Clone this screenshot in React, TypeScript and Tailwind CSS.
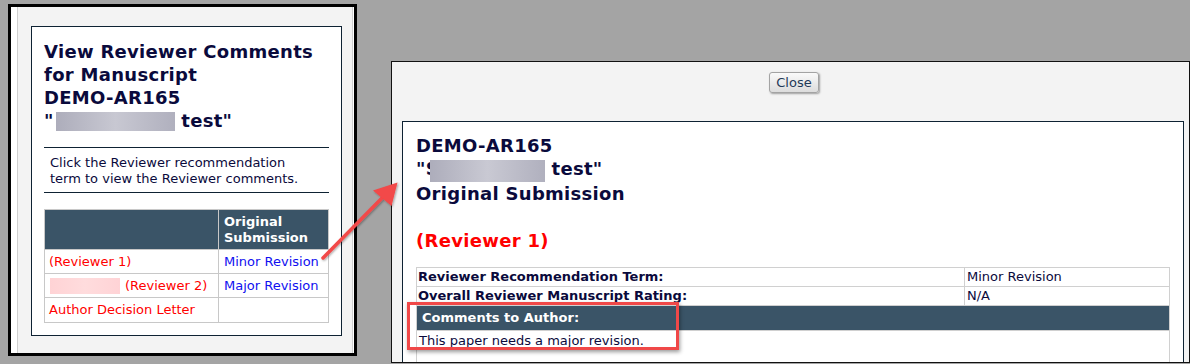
import React from "react";

const NAVY = "text-[#0a0a3c]";

function Blur({ className }: { className: string }) {
  return <span className={`inline-block ${className}`} />;
}

export default function App() {
  return (
    <div className="relative w-[1190px] h-[364px] overflow-hidden bg-[#a4a4a4] flex items-start font-['DejaVu_Sans',Verdana,sans-serif]">
      {/* Left window */}
      <div className="ml-[8px] mt-[4px] w-[349px] h-[352px] shrink-0 border-[3px] border-black bg-white flex pl-[6px] pr-[1px]">
        <div className="flex-1 border-x border-[#cfcfcf] bg-[#f3f3f3] pt-[19px] pl-[13px]">
          <div className="w-[311px] h-[310px] border border-[#0e2233] bg-white px-[12px] pt-[13px]">
            <h1 className={`text-[18px] leading-[23px] font-bold tracking-[0.3px] ${NAVY}`}>
              View Reviewer Comments
              <br />
              for Manuscript
              <br />
              DEMO-AR165
              <br />"
              <Blur className="ml-[2px] w-[119px] h-[19px] align-[-4px] bg-gradient-to-r from-[#adadbb] via-[#c8c8d2] to-[#b0b0be]" /> test"
            </h1>
            <div className="mt-[15px] border-t border-[#0e2233]" />
            <p className={`mt-[7px] pl-[6px] pr-[20px] text-[13px] leading-[16px] ${NAVY}`}>
              Click the Reviewer recommendation term to view the Reviewer comments.
            </p>
            <div className="mt-[5px] border-t border-[#0e2233]" />
            <div className="mt-[16px] w-fit border-l border-t border-[#c8c8c8] grid grid-cols-[174px_110px] text-[13px] leading-[16px]">
              <div className="h-[40px] bg-[#3a5467] border-r border-b border-[#c8c8c8]" />
              <div className="h-[40px] bg-[#3a5467] border-r border-b border-[#c8c8c8] pt-[4px] pl-[5px] font-bold text-white">
                Original
                <br />
                Submission
              </div>
              <div className="h-[24px] border-r border-b border-[#c8c8c8] flex items-center pl-[4px] text-[#ff0000]">
                (Reviewer 1)
              </div>
              <div className="h-[24px] border-r border-b border-[#c8c8c8] flex items-center pl-[5px] text-[#1010f0]">
                Minor Revision
              </div>
              <div className="h-[24px] border-r border-b border-[#c8c8c8] flex items-center pl-[5px] text-[#ff0000]">
                <Blur className="w-[70px] h-[16px] bg-gradient-to-r from-[#ffd3d5] via-[#ffdcdd] to-[#ffd3d6]" />
                <span className="ml-[5px]">(Reviewer 2)</span>
              </div>
              <div className="h-[24px] border-r border-b border-[#c8c8c8] flex items-center pl-[5px] text-[#1010f0]">
                Major Revision
              </div>
              <div className="h-[25px] border-r border-b border-[#c8c8c8] flex items-center pl-[4px] text-[#ff0000]">
                Author Decision Letter
              </div>
              <div className="h-[25px] border-r border-b border-[#c8c8c8]" />
            </div>
          </div>
        </div>
      </div>

      {/* Right window */}
      <div className="ml-[34px] mt-[61px] flex-1 h-[302px] border border-[#111111] bg-[#f3f3f3] overflow-hidden flex flex-col">
        <div className="pt-[10px] pl-[7px] flex justify-center">
          <button className="w-[50px] h-[21px] rounded-[3px] border border-[#a3a3a3] bg-gradient-to-b from-[#fafafa] to-[#dcdcdc] shadow-[1px_1px_2px_rgba(0,0,0,0.35)] text-[13px] leading-[16px] text-[#1f3a58]">
            Close
          </button>
        </div>
        <div className="mt-[28px] ml-[10px] mr-[5px] flex-1 border border-b-0 border-[#0e2233] bg-white pl-[13px] pr-[12px] pt-[12px]">
          <h2 className={`text-[18px] leading-[23px] font-bold tracking-[0.3px] ${NAVY}`}>
            DEMO-AR165
            <br />
            "S
            <Blur className="ml-[-9px] w-[115px] h-[22px] align-[-7px] bg-gradient-to-r from-[#adadbb] via-[#c9c9d3] to-[#b0b0be]" /> test"
            <br />
            Original Submission
          </h2>
          <div className="mt-[24px] text-[18px] leading-[23px] font-bold tracking-[0.3px] text-[#ff0000]">
            (Reviewer 1)
          </div>
          <div className="mt-[15px] w-fit border-l border-t border-[#d0d0d0] grid grid-cols-[548px_205px] text-[13px] leading-[16px]">
            <div className={`h-[19px] border-r border-b border-[#d0d0d0] flex items-center pl-[1px] font-bold ${NAVY}`}>
              Reviewer Recommendation Term:
            </div>
            <div className={`h-[19px] border-r border-b border-[#d0d0d0] flex items-center pl-[2px] ${NAVY}`}>
              Minor Revision
            </div>
            <div className={`h-[19px] border-r border-b border-[#d0d0d0] flex items-center pl-[1px] font-bold ${NAVY}`}>
              Overall Reviewer Manuscript Rating:
            </div>
            <div className={`h-[19px] border-r border-b border-[#d0d0d0] flex items-center pl-[2px] ${NAVY}`}>
              N/A
            </div>
            <div className="col-span-2 h-[25px] bg-[#3a5467] border-r border-b border-[#d0d0d0] flex items-center pl-[5px] font-bold text-white">
              Comments to Author:
            </div>
            <div className={`col-span-2 h-[40px] border-r border-[#d0d0d0] pt-[2px] pl-[2px] ${NAVY}`}>
              This paper needs a major revision.
            </div>
          </div>
        </div>
      </div>

      {/* Annotations */}
      <svg
        className="absolute left-0 top-0 pointer-events-none"
        width="1190"
        height="364"
        viewBox="0 0 1190 364"
      >
        <defs>
          <filter id="sh" x="-20%" y="-20%" width="140%" height="140%">
            <feDropShadow dx="1" dy="1" stdDeviation="1" floodColor="#000" floodOpacity="0.35" />
          </filter>
        </defs>
        <g filter="url(#sh)">
          <line x1="323" y1="258" x2="384" y2="196" stroke="#f24848" strokeWidth="3.5" strokeLinecap="round" />
          <polygon points="397.5,182.5 373,190.5 391.5,206" fill="#f24848" />
        </g>
      </svg>
      <div className="absolute left-[407px] top-[302px] w-[272px] h-[48px] border-[3px] border-[#f04848] shadow-[1px_2px_4px_rgba(0,0,0,0.4)]" />
    </div>
  );
}
